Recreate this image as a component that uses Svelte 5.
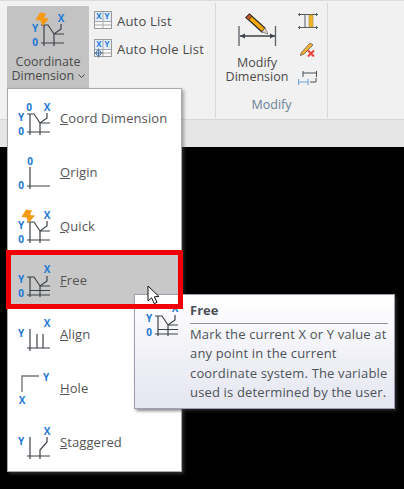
<script>
    const menuItems = [
        { kind: 'coord', key: 'C', rest: 'oord Dimension' },
        { kind: 'origin', key: 'O', rest: 'rigin' },
        { kind: 'quick', key: 'Q', rest: 'uick' },
        { kind: 'free', key: 'F', rest: 'ree', active: true },
        { kind: 'align', key: 'A', rest: 'lign' },
        { kind: 'hole', key: 'H', rest: 'ole' },
        { kind: 'staggered', key: 'S', rest: 'taggered' }
    ];
    const tooltipLines = [
        'Mark the current X or Y value at',
        'any point in the current',
        'coordinate system. The variable',
        'used is determined by the user.'
    ];
</script>

{#snippet letter(x, y, t)}
    <text class="axis" x={x} y={y + 3.8} text-anchor="middle">{t}</text>
{/snippet}

{#snippet bolt()}
    <path d="M12 3.5L7.5 11L12.5 11.5L14.5 17L21 9.5L16 9L18 4.5Z" fill="#f59a14" />
{/snippet}

{#snippet dimIcon(kind)}
    <svg class="dim" width="40" height="40" viewBox="0 0 40 40">
        <g fill="none" stroke="#3c4248" stroke-width="1.2">
            {#if kind === 'coord' || kind === 'quick'}
                <path d="M16 16V37M13 34H36M26 25V37M26 25H36M13 16H20L26 25L33 20V15" />
            {:else if kind === 'origin'}
                <path d="M16 15V37M13 34H36" />
            {:else if kind === 'free'}
                <path d="M16 17V37M13 35H36M16 30.5H36M26 26V37M26 26H36M13 17H20L26 26L33 21V16" />
            {:else if kind === 'align'}
                <path d="M16 15V37M23 20V34M29 20V34M13 34H36" />
            {:else if kind === 'hole'}
                <path d="M8 24V8H25" stroke="#777" stroke-width="1.4" />
            {:else if kind === 'staggered'}
                <path d="M16 15V37M13 34H36M26 37V28L33 20V15" />
            {/if}
        </g>
        {#if kind === 'quick'}
            {@render bolt()}
        {/if}
        {#if kind === 'coord' || kind === 'origin'}
            {@render letter(kind === 'origin' ? 16 : 15, 9, '0')}
        {/if}
        {#if kind === 'hole'}
            {@render letter(32, 9, 'Y')}
            {@render letter(8, 32, 'X')}
        {:else}
            {#if kind !== 'origin'}
                {@render letter(33, 9, 'X')}
                {@render letter(7, 19, 'Y')}
            {/if}
            {#if kind !== 'align' && kind !== 'staggered'}
                {@render letter(7, 33.5, '0')}
            {/if}
        {/if}
    </svg>
{/snippet}

{#snippet listIcon(hole)}
    <svg width="19" height="19" viewBox="0 0 19 19">
        <rect x="0.5" y="0.5" width="17" height="17" fill="#fafafa" stroke="#9a9a9a" />
        <rect x="1" y="1" width="16" height="9" fill="#e4eefa" />
        <path d="M9 1V10M1 10.5H17M1 14H17M9 10V17" stroke="#a8a8a8" fill="none" />
        <text class="axis small" x="5" y="8">X</text>
        <text class="axis small" x="13" y="8">Y</text>
        {#if hole}
            <circle cx="4.5" cy="14" r="2.6" fill="none" stroke="#4a78a8" />
            <path d="M4.5 9.5V18.5M0 14H9" stroke="#4a78a8" fill="none" />
        {/if}
    </svg>
{/snippet}

<div class="page">
    <div class="top-line"></div>
    <div class="ribbon">
        <div class="group first">
            <div class="big-button">
                <div class="big-icon">{@render dimIcon('quick')}</div>
                <span>Coordinate</span>
                <span class="with-caret">Dimension
                    <svg width="7" height="4" viewBox="0 0 7 4"><path d="M0.5 0.5L3.5 3.5L6.5 0.5" fill="none" stroke="#444" /></svg>
                </span>
            </div>
            <div class="small-col">
                <div class="small-row">{@render listIcon(false)}<span>Auto List</span></div>
                <div class="small-row">{@render listIcon(true)}<span>Auto Hole List</span></div>
            </div>
        </div>
        <div class="group modify">
            <div class="modify-body">
                <div class="modify-main">
                    <svg width="40" height="36" viewBox="0 0 40 36">
                        <path d="M2 13V33M38.5 13V33" stroke="#5a6068" stroke-width="1.3" fill="none" />
                        <path d="M3 23H38" stroke="#3c4248" stroke-width="1.3" fill="none" />
                        <path d="M3 23L8 20.5V25.5ZM38 23L33 20.5V25.5Z" fill="#3c4248" />
                        <path d="M9 4.5L12.5 1L28 15L25 19Z" fill="#f5a800" stroke="#2b2b2b" stroke-width="1.2" />
                        <path d="M9 4.5L12.5 1L15 3.2L11.5 7Z" fill="#c9552a" stroke="#2b2b2b" stroke-width="0.8" />
                        <path d="M25 19L28 15L31 21Z" fill="#e8d8c0" stroke="#777" stroke-width="0.8" />
                    </svg>
                    <span>Modify</span>
                    <span>Dimension</span>
                </div>
                <div class="modify-side">
                    <svg width="20" height="16" viewBox="0 0 20 16">
                        <path d="M0 1.5H20M0 14.5H20M1.5 0V3M18.5 0V3M1.5 13V16M18.5 13V16M7 2V14" stroke="#555c63" fill="none" />
                        <rect x="11" y="2" width="4" height="12" fill="#f0b428" stroke="#a88a40" stroke-width="0.6" />
                    </svg>
                    <svg width="16" height="16" viewBox="0 0 16 16">
                        <path d="M1 12L10 2L13 4L4 13L0.5 14.5Z" fill="#f3b13a" stroke="#6a5a48" stroke-width="0.8" />
                        <path d="M8 9.5L14 15.5M14 9.5L8 15.5" stroke="#f0443a" stroke-width="2" fill="none" />
                    </svg>
                    <svg width="20" height="16" viewBox="0 0 20 16">
                        <path d="M5 2V8M18.5 2V8M5 4H18.5" stroke="#4a5056" fill="none" />
                        <path d="M18 9V13H12" stroke="#4a5056" fill="none" />
                        <path d="M0.5 10V16M10 10V16M0.5 13H10" stroke="#6fa3dc" stroke-width="1.1" fill="none" />
                    </svg>
                </div>
            </div>
            <div class="group-label">Modify</div>
        </div>
    </div>
    <div class="bar"></div>

    <div class="menu">
        {#each menuItems as item}
            <div class="menu-item" class:active={item.active}>
                {@render dimIcon(item.kind)}
                <span class="menu-label"><u>{item.key}</u>{item.rest}</span>
            </div>
        {/each}
    </div>

    <div class="tooltip">
        <div class="tip-icon">{@render dimIcon('free')}</div>
        <div class="tip-body">
            <div class="tip-title">Free</div>
            {#each tooltipLines as line}
                <div class="tip-line">{line}</div>
            {/each}
        </div>
    </div>

    <div class="red-box"></div>

    <svg class="cursor" width="15" height="20" viewBox="0 0 15 20">
        <path d="M1 1V16L4.6 12.8L7.2 18.6L10 17.4L7.4 11.8L12 11.5Z" fill="#fff" stroke="#111" stroke-width="1" />
    </svg>
</div>

<style>
    :global(body) {
        margin: 0;
        background: #000;
    }
    .page {
        position: relative;
        width: 404px;
        height: 489px;
        overflow: hidden;
        background: #000;
        font-family: "Open Sans", "Noto Sans", sans-serif;
        font-size: 12px;
        color: #4a4a4a;
    }
    .top-line {
        height: 1px;
        background: #dcdcdc;
    }
    .ribbon {
        display: flex;
        height: 119px;
        box-sizing: border-box;
        background: #f1f1f1;
        border-bottom: 1px solid #d6d6d6;
    }
    .group {
        display: flex;
        height: 115px;
        margin-top: 2px;
        box-sizing: border-box;
        border-right: 1px solid #d8d8d8;
    }
    .first {
        width: 216px;
        padding: 3px 0 0 7px;
    }
    .big-button {
        display: flex;
        flex-direction: column;
        align-items: center;
        width: 82px;
        height: 82px;
        background: #c3c3c3;
        font-size: 12.5px;
        line-height: 14px;
    }
    .big-icon {
        height: 49px;
        padding-top: 3px;
        box-sizing: border-box;
    }
    .with-caret svg {
        vertical-align: 2px;
    }
    .small-col {
        display: flex;
        flex-direction: column;
        gap: 9px;
        margin: 5px 0 0 5px;
    }
    .small-row {
        display: flex;
        align-items: center;
        gap: 4px;
        font-size: 13px;
        letter-spacing: 0.2px;
    }
    .modify {
        flex-direction: column;
        width: 112px;
    }
    .modify-body {
        display: flex;
        flex: 1;
    }
    .modify-main {
        display: flex;
        flex-direction: column;
        align-items: center;
        width: 82px;
        padding-top: 10px;
        font-size: 12.5px;
        line-height: 14px;
    }
    .modify-main svg {
        margin-bottom: 7px;
    }
    .modify-side {
        display: flex;
        flex-direction: column;
        align-items: center;
        gap: 12px;
        width: 20px;
        padding-top: 10px;
    }
    .group-label {
        text-align: center;
        height: 22px;
        font-size: 12.5px;
        color: #6b8198;
    }
    .bar {
        height: 27px;
        background: #e6e6e6;
    }
    .menu {
        position: absolute;
        left: 7px;
        top: 88px;
        width: 175px;
        height: 384px;
        box-sizing: border-box;
        padding-top: 2px;
        background: #fff;
        border: 1px solid #a9a9a9;
        box-shadow: 2px 2px 3px rgba(90, 90, 90, 0.5);
    }
    .menu-item {
        display: flex;
        align-items: center;
        height: 54px;
        padding-left: 6px;
        gap: 6px;
    }
    .menu-item.active {
        background: #c8c8c8;
    }
    .menu-label {
        font-size: 13px;
        letter-spacing: 0.1px;
        color: #555;
    }
    .tooltip {
        position: absolute;
        left: 134px;
        top: 294px;
        width: 261px;
        height: 115px;
        box-sizing: border-box;
        display: flex;
        background: linear-gradient(#ffffff, #e4e5f0);
        border: 1px solid #9a9fb2;
        box-shadow: 2px 2px 3px rgba(60, 60, 60, 0.6);
        color: #4c5358;
    }
    .tip-icon {
        width: 55px;
        height: 44px;
        padding: 4px 0 0 7px;
        box-sizing: border-box;
    }
    .tip-body {
        flex: 1;
        padding: 5px 6px 0 0;
    }
    .tip-title {
        font-weight: 700;
        font-size: 13px;
        line-height: 20px;
        padding-bottom: 3px;
        margin-bottom: 1px;
        border-bottom: 1px solid #8f939c;
    }
    .tip-line {
        line-height: 19.3px;
        font-size: 13px;
        letter-spacing: 0.16px;
        white-space: nowrap;
    }
    .red-box {
        position: absolute;
        left: 6px;
        top: 250px;
        width: 177px;
        height: 59px;
        box-sizing: border-box;
        border: 5px solid #f00000;
    }
    .cursor {
        position: absolute;
        left: 147px;
        top: 285px;
    }
    .axis {
        font-family: "Open Sans", sans-serif;
        font-weight: 700;
        font-size: 10px;
        fill: #1d78d6;
    }
    .axis.small {
        font-size: 8px;
        text-anchor: middle;
    }
    .dim {
        flex: none;
        overflow: visible;
    }
</style>
